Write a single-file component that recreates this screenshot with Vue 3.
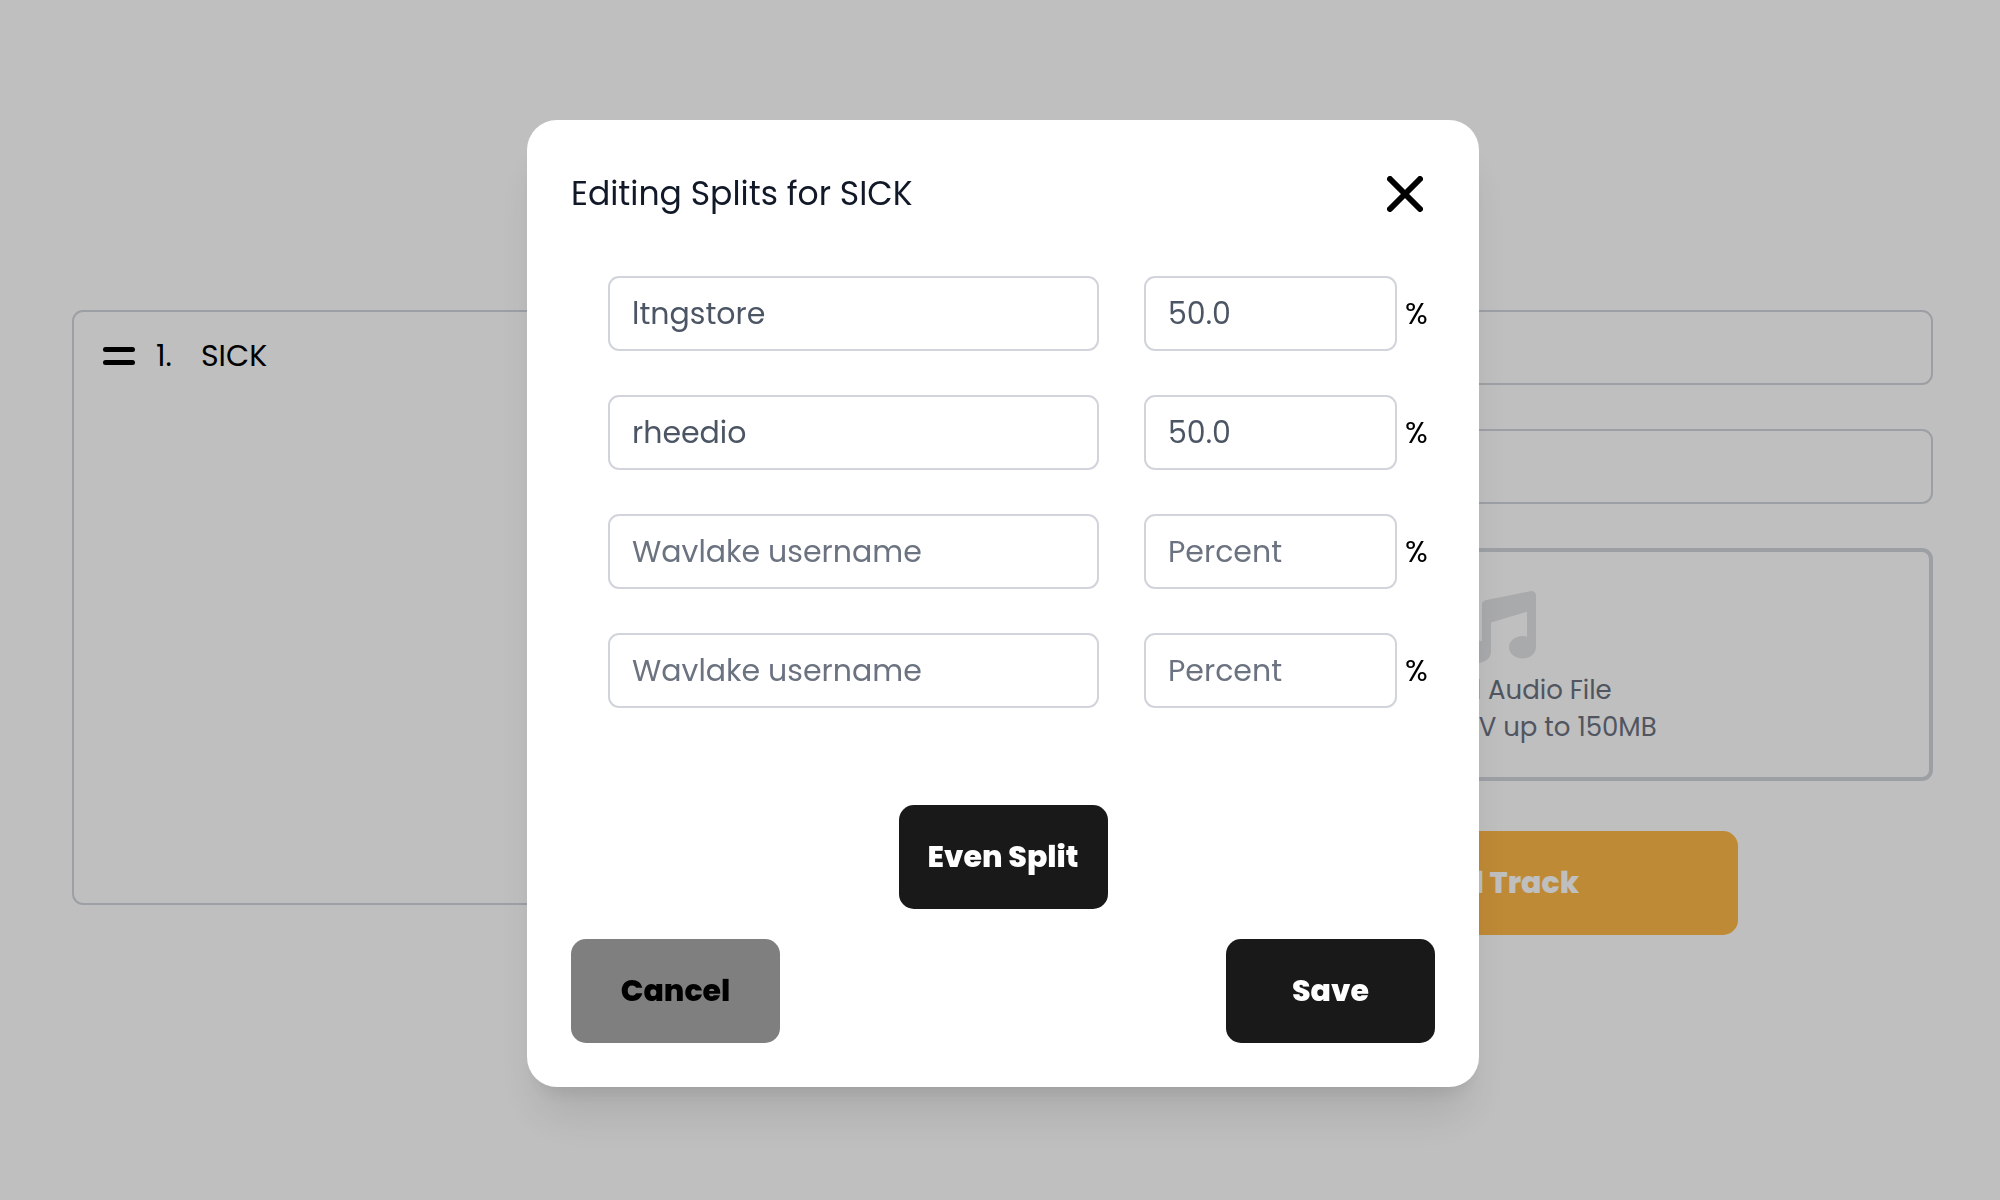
<script setup>
import { ref } from 'vue'

const tracks = ref([{ title: 'SICK' }])
const splits = ref([
  { name: 'ltngstore', percent: '50.0' },
  { name: 'rheedio', percent: '50.0' },
  { name: '', percent: '' },
  { name: '', percent: '' },
])
</script>

<template>
  <div class="app">
    <main class="page">
      <ol class="tracks">
        <li v-for="(track, i) in tracks" :key="track.title" class="track">
          <svg class="handle" viewBox="0 0 32 20" aria-hidden="true">
            <path d="M2.5 3.5H29.5M2.5 16.5H29.5" />
          </svg>
          <span class="number">{{ i + 1 }}.</span>
          <span>{{ track.title }}</span>
        </li>
      </ol>
      <form class="upload" @submit.prevent>
        <input class="field" type="text" aria-label="Track title" />
        <input class="field" type="text" aria-label="Track number" />
        <div class="dropzone">
          <svg class="music" viewBox="0 0 512 512" aria-hidden="true">
            <path
              d="M499.1 6.3c8.1 6 12.9 15.600 12.900 25.700v368c0 44.200-43 80-96 80s-96-35.800-96-80 43-80 96-80c11.200 0 22 1.600 32 4.600V147L192 223.800V432c0 44.200-43 80-96 80S0 476.200 0 432s43-80 96-80c11.200 0 22 1.600 32 4.600V96c0-14.100 9.300-26.600 22.800-30.700l320-64c9.700-2.900 20.200-1.100 28.300 5z"
            />
          </svg>
          <p>Upload Audio File</p>
          <p>MP3 or WAV up to 150MB</p>
        </div>
        <button class="btn add" type="submit">Add Track</button>
      </form>
    </main>

    <div class="overlay">
      <section class="modal" role="dialog" aria-modal="true" aria-labelledby="modal-title">
        <header class="head">
          <h2 id="modal-title">Editing Splits for SICK</h2>
          <button class="close" type="button" aria-label="Close">
            <svg viewBox="0 0 36 36" aria-hidden="true">
              <path d="M3 3L33 33M33 3L3 33" />
            </svg>
          </button>
        </header>
        <div class="rows">
          <div v-for="(split, i) in splits" :key="i" class="row">
            <input
              v-model="split.name"
              class="field name"
              type="text"
              placeholder="Wavlake username"
              :aria-label="`Username ${i + 1}`"
            />
            <label class="share">
              <input
                v-model="split.percent"
                class="field"
                type="text"
                inputmode="decimal"
                placeholder="Percent"
              />
              <span>%</span>
            </label>
          </div>
        </div>
        <button class="btn even" type="button">Even Split</button>
        <footer class="actions">
          <button class="btn cancel" type="button">Cancel</button>
          <button class="btn" type="button">Save</button>
        </footer>
      </section>
    </div>
  </div>
</template>

<style>
body {
  margin: 0;
  background: #fff;
}
</style>

<style scoped>
.app,
.app * {
  box-sizing: border-box;
}
.app {
  min-height: 100vh;
  color: #000;
  font: 400 30px/44px Poppins, Inter, sans-serif;
}
.page {
  display: grid;
  grid-template-columns: 1fr 1fr;
  gap: 128px;
  align-items: start;
  padding: 310px 67px 100px 72px;
}
.tracks {
  min-height: 595px;
  margin: 0;
  padding: 22px 29px;
  border: 2px solid #d1d5db;
  border-radius: 11px;
  list-style: none;
}
.track {
  display: flex;
  align-items: center;
}
.handle {
  width: 32px;
  height: 20px;
  margin-right: 21px;
}
.handle path,
.close path {
  fill: none;
  stroke: #000;
  stroke-width: 5;
  stroke-linecap: round;
}
.number {
  width: 45px;
}
.upload {
  display: flex;
  flex-direction: column;
  gap: 44px;
}
.field {
  width: 100%;
  min-width: 0;
  height: 75px;
  padding: 0 22px;
  border: 2px solid #d1d5db;
  border-radius: 11px;
  background: transparent;
  color: #4b5563;
  font: inherit;
}
.field::placeholder {
  color: #6b7280;
  opacity: 1;
}
.dropzone {
  display: flex;
  flex-direction: column;
  align-items: center;
  height: 233px;
  padding-top: 39px;
  border: 4px solid #d1d5db;
  border-radius: 11px;
  color: #6b7280;
  font-size: 26px;
  line-height: 37px;
}
.dropzone p {
  margin: 0;
}
.music {
  width: 72px;
  height: 72px;
  margin-bottom: 9px;
  fill: #e1e3e6;
}
.btn {
  width: 209px;
  height: 104px;
  padding: 0;
  border: 0;
  border-radius: 15px;
  background: #191919;
  color: #fff;
  font: inherit;
  font-weight: 800;
}
.add {
  align-self: center;
  width: 55%;
  margin-top: 6px;
  background: #ffb848;
}
.overlay {
  position: fixed;
  inset: 0;
  display: flex;
  align-items: center;
  justify-content: center;
  padding: 7px 0 0 6px;
  background: rgba(0, 0, 0, 0.25);
}
.modal {
  display: flex;
  flex-direction: column;
  width: 100%;
  max-width: 952px;
  padding: 44px;
  border-radius: 30px;
  background: #fff;
  box-shadow:
    0 37px 46px -9px rgba(0, 0, 0, 0.1),
    0 15px 19px -11px rgba(0, 0, 0, 0.1);
}
.head {
  display: flex;
  align-items: center;
  justify-content: space-between;
}
.head h2 {
  margin: 0;
  color: #111827;
  font-size: 33px;
  font-weight: 400;
}
.close {
  display: flex;
  align-items: center;
  justify-content: center;
  width: 60px;
  height: 60px;
  padding: 0;
  border: 0;
  background: none;
}
.close svg {
  width: 36px;
  height: 36px;
}
.close path {
  stroke-width: 6;
}
.rows {
  display: flex;
  flex-direction: column;
  gap: 44px;
  padding: 52px 0 0 37px;
}
.row {
  display: flex;
  gap: 45px;
}
.name {
  flex: 0 1 491px;
}
.share {
  display: flex;
  flex: 1;
  align-items: center;
  gap: 8px;
}
.share .field {
  flex: 0 1 253px;
}
.even {
  align-self: center;
  margin: 97px 0 30px;
}
.actions {
  display: flex;
  justify-content: space-between;
}
.cancel {
  background: #7f7f7f;
  color: #000;
}
</style>
